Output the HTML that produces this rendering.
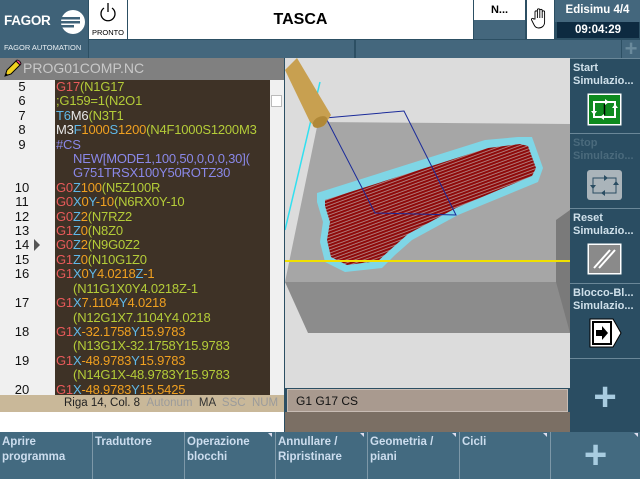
<!DOCTYPE html>
<html><head><meta charset="utf-8"><style>
*{margin:0;padding:0;box-sizing:border-box}
body{width:640px;height:479px;overflow:hidden;background:#2c4f63;font-family:"Liberation Sans",sans-serif;position:relative}
.a{position:absolute}
.code{font-size:13px;line-height:14.4px;white-space:pre;letter-spacing:-0.2px}
.r{color:#e85a5a}.c{color:#60b8e8}.o{color:#f0a020}.y{color:#b4cc38}.w{color:#e8e8e8}.p{color:#8a88e8}
.num{font-size:13px;line-height:14.4px;color:#111;text-align:center;width:40px}
.sk{position:absolute;top:432px;height:47px;background:#436a80;border-left:1px solid #7d98a8;color:#cde;font-size:11.5px;font-weight:bold;padding:3px 2px;line-height:15px}
.rb{position:absolute;left:570px;width:70px;background:#2a4d62;border-top:1px solid #6a8798;color:#cfe0ea;font-size:11px;font-weight:bold;padding:3px 3px;line-height:13px}
</style></head><body>
<!-- top -->
<div class="a" style="left:0;top:0;width:88px;height:58px;background:#3f6278"></div>
<div class="a" style="left:4px;top:13px;color:#fff;font-weight:bold;font-size:13.5px;letter-spacing:-0.3px">FAGOR</div>
<svg class="a" style="left:60px;top:9px" width="26" height="26" viewBox="0 0 26 26"><circle cx="13" cy="13" r="12" fill="#fff"/><rect x="0" y="8" width="20" height="2.5" fill="#3f6278"/><rect x="0" y="12" width="20" height="2.5" fill="#3f6278"/><rect x="0" y="16" width="14" height="2.5" fill="#3f6278"/></svg>
<div class="a" style="left:4px;top:43px;color:#e8eef2;font-size:7.5px;white-space:nowrap">FAGOR AUTOMATION</div>
<div class="a" style="left:89px;top:0;width:38px;height:39px;background:#fff"></div>
<svg class="a" style="left:99px;top:2px" width="18" height="20" viewBox="0 0 18 20"><path d="M5 6 A7 7 0 1 0 13 6" fill="none" stroke="#000" stroke-width="1.3"/><line x1="9" y1="1" x2="9" y2="10" stroke="#000" stroke-width="1.3"/></svg>
<div class="a" style="top:28px;width:38px;font-size:7.5px;color:#000;text-align:center;left:89px">PRONTO</div>
<div class="a" style="left:128px;top:0;width:345px;height:39px;background:#fff;text-align:center;font-weight:bold;font-size:16px;line-height:39px">TASCA</div>
<div class="a" style="left:474px;top:0;width:51px;height:20px;background:#fff;font-weight:bold;font-size:11px;text-align:center;line-height:20px">N...</div>
<div class="a" style="left:474px;top:20px;width:51px;height:19px;background:#44677d"></div>
<div class="a" style="left:527px;top:0;width:27px;height:39px;background:#fff"></div>
<svg class="a" style="left:531px;top:7px" width="18" height="22" viewBox="0 0 18 22"><path d="M4 12V5a1.2 1.2 0 0 1 2.4 0V11V3a1.2 1.2 0 0 1 2.4 0V11V3.5a1.2 1.2 0 0 1 2.4 0V11V5a1.2 1.2 0 0 1 2.4 0V15c0 4-3 6-6 6s-4-2-5-4l-2-4a1 1 0 0 1 2-1z" fill="#fff" stroke="#000" stroke-width="0.9"/></svg>
<div class="a" style="left:555px;top:0;width:85px;height:22px;background:#44677d;color:#fff;font-weight:bold;font-size:11.5px;text-align:center;line-height:20px">Edisimu 4/4</div>
<div class="a" style="left:557px;top:22px;width:82px;height:16px;background:#0d2a40;color:#fff;font-weight:bold;font-size:11.5px;text-align:center;line-height:16px">09:04:29</div>
<div class="a" style="left:89px;top:40px;width:265px;height:18px;background:#44677d"></div>
<div class="a" style="left:356px;top:40px;width:265px;height:18px;background:#44677d"></div>
<div class="a" style="left:622px;top:40px;width:18px;height:18px;background:#44677d;color:#6a8a9c;font-weight:bold;font-size:22px;line-height:18px;text-align:center">+</div>
<!-- editor -->
<div class="a" style="left:0;top:58px;width:284px;height:22px;background:#808080"></div>
<svg class="a" style="left:2px;top:59px" width="20" height="20" viewBox="0 0 20 20"><path d="M3 17l2-6L14 2l4 4-9 9z" fill="#f0d020" stroke="#000" stroke-width="1"/><path d="M14 2l4 4 1-1c0-2-2-4-4-4z" fill="#e84080" stroke="#000" stroke-width="0.8"/><path d="M3 17l1-3 2 2z" fill="#000"/></svg>
<div class="a" style="left:23px;top:60px;color:#c8c8c8;font-size:14px">PROG01COMP.NC</div>
<div class="a" style="left:0;top:80px;width:55px;height:315px;background:#f0f0f0"></div>
<div class="a" style="left:55px;top:80px;width:215px;height:315px;background:#3e3226"></div>
<div class="a" style="left:270px;top:80px;width:14px;height:315px;background:#f0f0f0"></div>
<div class="a" style="left:271px;top:95px;width:11px;height:12px;background:#fff;border:1px solid #bbb"></div>
<div class="a num" style="left:2px;top:80px">5<br>6<br>7<br>8<br>9<br><br><br>10<br>11<br>12<br>13<br>14<br>15<br>16<br><br>17<br><br>18<br><br>19<br><br>20</div>
<svg class="a" style="left:33px;top:239px" width="8" height="12"><path d="M1 0L7 6L1 12z" fill="#555"/></svg>
<div class="a code" style="left:56px;top:80px;width:214px;height:315px;overflow:hidden"><span class="r">G17</span><span class="y">(N1G17</span>
<span class="y">;G159=1(N2O1</span>
<span class="c">T6</span><span class="w">M6</span><span class="y">(N3T1</span>
<span class="w">M3</span><span class="c">F</span><span class="o">1000</span><span class="c">S</span><span class="o">1200</span><span class="y">(N4F1000S1200M3</span>
<span class="p">#CS</span>
<span class="p">     NEW[MODE1,100,50,0,0,0,30](</span>
<span class="p">     G751TRSX100Y50ROTZ30</span>
<span class="r">G0</span><span class="c">Z</span><span class="o">100</span><span class="y">(N5Z100R</span>
<span class="r">G0</span><span class="c">X</span><span class="o">0</span><span class="c">Y</span><span class="o">-10</span><span class="y">(N6RX0Y-10</span>
<span class="r">G0</span><span class="c">Z</span><span class="o">2</span><span class="y">(N7RZ2</span>
<span class="r">G1</span><span class="c">Z</span><span class="o">0</span><span class="y">(N8Z0</span>
<span class="r">G0</span><span class="c">Z</span><span class="o">2</span><span class="y">(N9G0Z2</span>
<span class="r">G1</span><span class="c">Z</span><span class="o">0</span><span class="y">(N10G1Z0</span>
<span class="r">G1</span><span class="c">X</span><span class="o">0</span><span class="c">Y</span><span class="o">4.0218</span><span class="c">Z</span><span class="o">-1</span>
<span class="y">     (N11G1X0Y4.0218Z-1</span>
<span class="r">G1</span><span class="c">X</span><span class="o">7.1104</span><span class="c">Y</span><span class="o">4.0218</span>
<span class="y">     (N12G1X7.1104Y4.0218</span>
<span class="r">G1</span><span class="c">X</span><span class="o">-32.1758</span><span class="c">Y</span><span class="o">15.9783</span>
<span class="y">     (N13G1X-32.1758Y15.9783</span>
<span class="r">G1</span><span class="c">X</span><span class="o">-48.9783</span><span class="c">Y</span><span class="o">15.9783</span>
<span class="y">     (N14G1X-48.9783Y15.9783</span>
<span class="r">G1</span><span class="c">X</span><span class="o">-48.9783</span><span class="c">Y</span><span class="o">15.5425</span></div>
<div class="a" style="left:0;top:395px;width:284px;height:17px;background:#c9b899;font-size:11.5px;line-height:17px;color:#222;padding-left:64px;white-space:nowrap;overflow:hidden">Riga 14, Col. 8 &nbsp;<span style="color:#9b9b9b">Autonum</span> &nbsp;<span style="color:#333">MA</span> &nbsp;<span style="color:#9b9b9b">SSC &nbsp;NUM</span></div>
<div class="a" style="left:0;top:412px;width:284px;height:20px;background:#fff"></div>
<!-- 3D view -->
<svg class="a" style="left:285px;top:58px" width="285" height="330" viewBox="285 58 285 330">
<defs><pattern id="st" width="3" height="3" patternUnits="userSpaceOnUse" patternTransform="rotate(-20)"><rect width="3" height="3" fill="#b89090"/><rect width="3" height="2.2" fill="#8e0a0a"/></pattern></defs>
<rect x="285" y="58" width="285" height="330" fill="#dcdcdc"/>
<polygon points="318,122 570,124 570,282 285,282" fill="#a6a6a6"/>
<polygon points="285,282 570,282 570,333 308,333" fill="#8c8c8c"/>
<polygon points="556,220 570,210 570,333 556,282" fill="#7a7a7a"/>
<polygon points="317,193 485,140 518,137 532,137 543,168 538,182 458,215 412,240 395,255 382,268 345,272 325,262 320,242 323,222 317,202" fill="#7fd6e6"/>
<polygon points="325,200 488,148 520,144 528,146 536,168 532,176 456,208 408,234 390,250 378,261 347,265 331,257 327,240 330,222 325,206" fill="url(#st)"/>
<line x1="285" y1="261" x2="570" y2="261" stroke="#f0e000" stroke-width="2"/>
<polyline points="325,118 404,111 456,215 375,213 327,120" fill="none" stroke="#1a2a9a" stroke-width="1"/>
<line x1="320" y1="82" x2="285" y2="230" stroke="#30e0f0" stroke-width="1.5"/>
<polygon points="285,70 297,58 331,115 324,126 317,128 310,122" fill="#c8a050"/>
<ellipse cx="320" cy="122" rx="8" ry="5" fill="#b08838" transform="rotate(-30 320 122)"/>
</svg>
<div class="a" style="left:287px;top:389px;width:281px;height:23px;background:#a99a8f;border:1px solid #c8bcb4;font-size:12px;line-height:22px;padding-left:8px;color:#111">G1 G17 CS</div>
<div class="a" style="left:285px;top:412px;width:285px;height:20px;background:#7b6f64"></div>
<!-- right -->
<div class="rb" style="top:58px;height:75px">Start<br>Simulazio...
<svg style="position:absolute;left:17px;top:34px" width="35" height="33" viewBox="0 0 35 33"><rect x="0.5" y="0.5" width="34" height="32" fill="#fff"/><rect x="2" y="2" width="31" height="29" fill="#0e8a1e"/><path d="M7 9H28V24H7z" fill="none" stroke="#fff" stroke-width="2"/><line x1="17.5" y1="11" x2="17.5" y2="22" stroke="#000" stroke-width="1.5"/><path d="M18 6l4 3-4 3z M17 21l-4 3 4 3z M4 18l3 4 3-4z M25 15l3-4 3 4z" fill="#fff"/></svg></div>
<div class="rb" style="top:133px;height:75px;color:#4a6a7c">Stop<br>Simulazio...
<svg style="position:absolute;left:17px;top:36px" width="35" height="30" viewBox="0 0 35 30"><rect x="0" y="0" width="35" height="30" rx="3" fill="#aab4ba"/><path d="M6 8H29V23H6z" fill="none" stroke="#2a4d62" stroke-width="1"/><path d="M17 5l4 3-4 3z M18 20l-4 3 4 3z M3 15l3 4 3-4z M26 15l3-4 3 4z" fill="#2a4d62"/></svg></div>
<div class="rb" style="top:208px;height:75px">Reset<br>Simulazio...
<svg style="position:absolute;left:17px;top:34px" width="35" height="32" viewBox="0 0 35 32"><rect x="0.5" y="0.5" width="34" height="31" fill="#fff"/><rect x="2" y="2" width="31" height="28" fill="#8a8a8a"/><line x1="7" y1="25" x2="23" y2="7" stroke="#fff" stroke-width="2"/><line x1="12" y1="25" x2="28" y2="7" stroke="#fff" stroke-width="2"/></svg></div>
<div class="rb" style="top:283px;height:75px">Blocco-Bl...<br>Simulazio...
<svg style="position:absolute;left:19px;top:34px" width="34" height="30" viewBox="0 0 34 30"><path d="M1 1H24L32 15L24 29H1z" fill="#fff" stroke="#000"/><rect x="4" y="4" width="18" height="22" fill="#fff" stroke="#000" stroke-width="2"/><path d="M7 12H13V8L19 15L13 22V18H7z" fill="#000"/></svg></div>
<div class="rb" style="top:358px;height:74px;text-align:center;font-size:40px;line-height:70px;color:#a8cce0">+</div>
<!-- bottom softkeys -->
<div class="sk" style="left:0;width:92px;border-left:none">Aprire<br>programma</div>
<div class="sk" style="left:92px;width:92px">Traduttore</div>
<div class="sk" style="left:184px;width:91px">Operazione<br>blocchi</div>
<div class="sk" style="left:275px;width:92px">Annullare /<br>Ripristinare</div>
<div class="sk" style="left:367px;width:92px">Geometria /<br>piani</div>
<div class="sk" style="left:459px;width:91px">Cicli</div>
<div class="sk" style="left:550px;width:90px;text-align:center;font-size:40px;line-height:40px;color:#a8cce0">+</div>
<svg class="a" style="left:0;top:432px" width="640" height="8"><path d="M268 1h4v4z M360 1h4v4z M452 1h4v4z M543 1h4v4z M634 1h4v4z" fill="#dde"/></svg>
</body></html>
